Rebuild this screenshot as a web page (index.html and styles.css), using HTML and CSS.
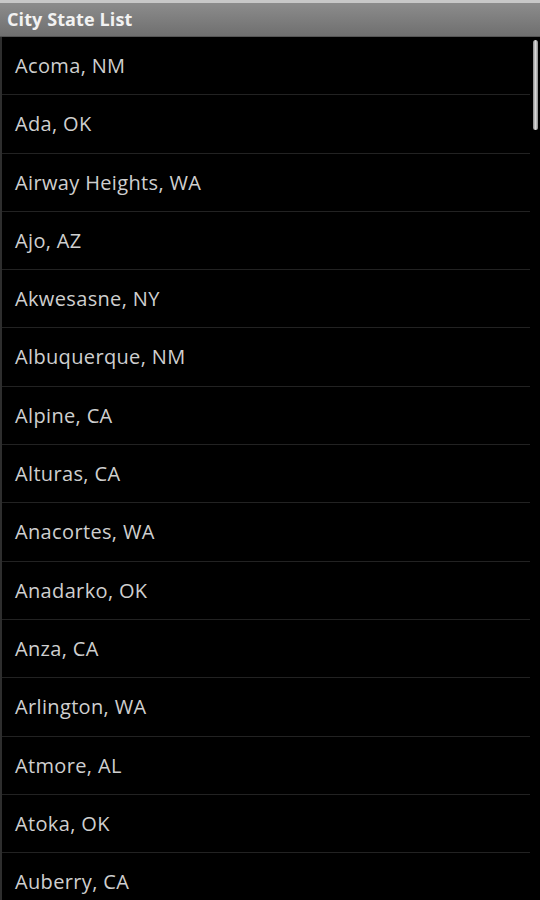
FILE: index.html
```html
<!DOCTYPE html>
<html lang="en">

<head>
    <meta charset="UTF-8">
    <meta name="viewport" content="width=device-width, initial-scale=1.0">
    <title>City State List</title>
    <link rel="stylesheet" href="styles.css">
</head>

<body>
    <div class="title-bar">City State List</div>
    <div class="list-wrap">
        <ul class="city-list">
            <li>Acoma, NM</li>
            <li>Ada, OK</li>
            <li>Airway Heights, WA</li>
            <li>Ajo, AZ</li>
            <li>Akwesasne, NY</li>
            <li>Albuquerque, NM</li>
            <li>Alpine, CA</li>
            <li>Alturas, CA</li>
            <li>Anacortes, WA</li>
            <li>Anadarko, OK</li>
            <li>Anza, CA</li>
            <li>Arlington, WA</li>
            <li>Atmore, AL</li>
            <li>Atoka, OK</li>
            <li>Auberry, CA</li>
        </ul>
        <div class="scroll-thumb"></div>
    </div>
</body>

</html>
```

FILE: styles.css
```css
body {
    margin: 0;
    padding: 0;
    width: 540px;
    height: 900px;
    overflow: hidden;
    background-color: #000;
    font-family: "Open Sans", "DejaVu Sans", sans-serif;
}

.title-bar {
    height: 33px;
    line-height: 33px;
    padding-left: 7px;
    border-top: 3px solid #c8c8c8; /* light top edge */
    border-bottom: 1px solid #555;
    background: linear-gradient(#8c8c8c, #6f6f6f);
    color: #f2f2f2;
    font-size: 18px;
    font-weight: bold;
    letter-spacing: 0.1px;
}

.list-wrap {
    position: relative;
    border-left: 2px solid #2e2e2e;
    height: 863px;
    overflow: hidden;
}

.city-list {
    list-style: none;
    margin: 0;
    padding: 0;
}

.city-list li {
    height: 57.3px;
    line-height: 57px;
    padding-left: 13px;
    border-bottom: 1px solid #222;
    color: #cfcfcf;
    font-size: 20px;
    letter-spacing: 0.35px;
    margin-right: 10px;
}

/* scrollbar thumb sits over the list */
.scroll-thumb {
    position: absolute;
    top: 3px;
    right: 2px;
    width: 5px;
    height: 90px;
    border-radius: 3px;
    background: linear-gradient(90deg, #888, #d8d8d8, #888);
}
```
